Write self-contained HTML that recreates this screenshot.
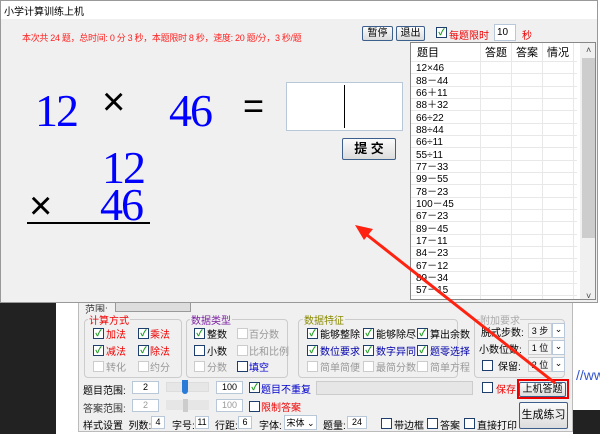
<!DOCTYPE html><html><head><meta charset="utf-8"><style>
*{margin:0;padding:0;box-sizing:border-box}
body{width:600px;height:434px;overflow:hidden;position:relative;background:#fff;font-family:"Liberation Sans","Noto Sans CJK SC",sans-serif;font-size:10px;color:#000}
.a{position:absolute;white-space:nowrap}
.cb{position:absolute;width:11px;height:11px;border:1px solid #1e3f6e;background:#fff;font-size:9px;line-height:9px;color:#1a9a1a;text-align:center;font-weight:bold}
.cbd{border-color:#ccc}
.btn{position:absolute;border:1px solid #3d5f8c;border-radius:2px;background:linear-gradient(#fbfbfb,#dcdcdc);text-align:center;white-space:nowrap}
.grp{position:absolute;border:1px solid #ccc;border-radius:4px}
.inp{position:absolute;background:#fff;border:1px solid #b8c8d8;text-align:center;font-size:9px;white-space:nowrap;overflow:hidden}
.big{position:absolute;font-family:"Liberation Serif",serif;color:#0000ff;font-size:46px;line-height:44px;letter-spacing:-2px}
</style></head><body>
<div class="a" style="left:0;top:0;width:56px;height:434px;background:#222"></div>
<div class="a" style="left:573px;top:410px;width:27px;height:24px;background:#222"></div>
<!-- lower window -->
<div class="a" style="left:78px;top:290px;width:495px;height:142px;background:#f0f0f0;border:1px solid #bbb"></div>
<div class="a" style="left:85px;top:301px;color:#333">范围:</div>
<div class="a" style="left:115px;top:300px;width:76px;height:12px;background:#ddd;border:1px solid #999"></div>
<div class="grp" style="left:84px;top:319px;width:98px;height:59px"></div>
<div class="a" style="left:88px;top:312px;color:#e00;background:#f0f0f0;padding:0 1px">计算方式</div>
<div class="cb" style="left:93px;top:328px">✓</div><div class="a" style="left:106px;top:326px;color:#e00">加法</div>
<div class="cb" style="left:138px;top:328px">✓</div><div class="a" style="left:150px;top:326px;color:#e00">乘法</div>
<div class="cb" style="left:93px;top:345px">✓</div><div class="a" style="left:106px;top:343px;color:#e00">减法</div>
<div class="cb" style="left:138px;top:345px">✓</div><div class="a" style="left:150px;top:343px;color:#e00">除法</div>
<div class="cb cbd" style="left:93px;top:361px"></div><div class="a" style="left:106px;top:359px;color:#999">转化</div>
<div class="cb cbd" style="left:138px;top:361px"></div><div class="a" style="left:150px;top:359px;color:#999">约分</div>
<div class="grp" style="left:186px;top:319px;width:102px;height:59px"></div>
<div class="a" style="left:190px;top:312px;color:#7a1fa0;background:#f0f0f0;padding:0 1px">数据类型</div>
<div class="cb" style="left:194px;top:328px">✓</div><div class="a" style="left:207px;top:326px">整数</div>
<div class="cb cbd" style="left:237px;top:328px"></div><div class="a" style="left:249px;top:326px;color:#999">百分数</div>
<div class="cb" style="left:194px;top:345px"></div><div class="a" style="left:207px;top:343px">小数</div>
<div class="cb cbd" style="left:237px;top:345px"></div><div class="a" style="left:249px;top:343px;color:#999">比和比例</div>
<div class="cb cbd" style="left:194px;top:361px"></div><div class="a" style="left:207px;top:359px;color:#999">分数</div>
<div class="cb" style="left:237px;top:361px"></div><div class="a" style="left:249px;top:359px;color:#00c">填空</div>
<div class="grp" style="left:298px;top:319px;width:160px;height:59px"></div>
<div class="a" style="left:303px;top:312px;color:#8a8a00;background:#f0f0f0;padding:0 1px">数据特征</div>
<div class="cb" style="left:307px;top:328px">✓</div><div class="a" style="left:320px;top:326px">能够整除</div>
<div class="cb" style="left:363px;top:328px">✓</div><div class="a" style="left:376px;top:326px">能够除尽</div>
<div class="cb" style="left:417px;top:328px">✓</div><div class="a" style="left:430px;top:326px">算出余数</div>
<div class="cb" style="left:307px;top:345px">✓</div><div class="a" style="left:320px;top:343px;color:#00a">数位要求</div>
<div class="cb" style="left:363px;top:345px">✓</div><div class="a" style="left:376px;top:343px;color:#00a">数字异同</div>
<div class="cb" style="left:417px;top:345px">✓</div><div class="a" style="left:430px;top:343px;color:#00a">题零选择</div>
<div class="cb cbd" style="left:307px;top:361px"></div><div class="a" style="left:320px;top:359px;color:#999">简单简便</div>
<div class="cb cbd" style="left:363px;top:361px"></div><div class="a" style="left:376px;top:359px;color:#999">最简分数</div>
<div class="cb cbd" style="left:417px;top:361px"></div><div class="a" style="left:430px;top:359px;color:#999">简单方程</div>
<div class="grp" style="left:474px;top:319px;width:91px;height:59px"></div>
<div class="a" style="left:480px;top:312px;color:#aaa;background:#f0f0f0">附加要求</div>
<div class="a" style="left:481px;top:324px">脱式步数:</div><div class="inp" style="left:528px;top:323px;width:24px;height:15px;border-color:#ccc;background:#f4f4f4">3 步</div><div class="inp" style="left:552px;top:323px;width:13px;height:15px">⌄</div>
<div class="a" style="left:479px;top:341px">小数位数:</div><div class="inp" style="left:528px;top:340px;width:24px;height:15px;border-color:#ccc;background:#f4f4f4">1 位</div><div class="inp" style="left:552px;top:340px;width:13px;height:15px">⌄</div>
<div class="cb" style="left:482px;top:360px"></div><div class="a" style="left:498px;top:358px">保留:</div><div class="inp" style="left:528px;top:357px;width:24px;height:15px;border-color:#ccc;background:#f4f4f4">2 位</div><div class="inp" style="left:552px;top:357px;width:13px;height:15px">⌄</div>
<div class="a" style="left:83px;top:382px">题目范围:</div><div class="inp" style="left:132px;top:381px;width:27px;height:13px">2</div>
<div class="a" style="left:166px;top:382px;width:43px;height:10px;background:#e6e6e6;border:1px solid #ddd"></div><div class="a" style="left:182px;top:380px;width:6px;height:14px;background:#2a7ad8;border-radius:0 0 3px 3px"></div>
<div class="inp" style="left:216px;top:381px;width:27px;height:13px">100</div>
<div class="cb" style="left:249px;top:382px">✓</div><div class="a" style="left:261px;top:381px;color:#00c">题目不重复</div>
<div class="a" style="left:316px;top:381px;width:157px;height:14px;background:#e6e6e6;border:1px solid #ccc"></div>
<div class="cb" style="left:482px;top:382px"></div><div class="a" style="left:496px;top:381px;color:#e00">保存</div>
<div class="btn" style="left:519px;top:382px;width:47px;height:15px;line-height:13px">上机答题</div>
<div class="a" style="left:517px;top:379px;width:52px;height:20px;border:2px solid #e00"></div>
<div class="a" style="left:83px;top:400px;color:#333">答案范围:</div><div class="inp" style="left:132px;top:399px;width:27px;height:13px;color:#999">2</div>
<div class="a" style="left:166px;top:400px;width:43px;height:10px;background:#e6e6e6"></div><div class="a" style="left:183px;top:399px;width:5px;height:13px;background:#ccc"></div>
<div class="inp" style="left:216px;top:399px;width:27px;height:13px;color:#999">100</div>
<div class="cb" style="left:249px;top:401px"></div><div class="a" style="left:261px;top:399px;color:#e00">限制答案</div>
<div class="btn" style="left:519px;top:402px;width:49px;height:27px;line-height:25px;font-size:11px">生成练习</div>
<div class="a" style="left:83px;top:417px">样式设置 &nbsp;列数:</div><div class="inp" style="left:151px;top:416px;width:14px;height:13px">4</div>
<div class="a" style="left:172px;top:417px">字号:</div><div class="inp" style="left:195px;top:416px;width:14px;height:13px">11</div>
<div class="a" style="left:215px;top:417px">行距:</div><div class="inp" style="left:238px;top:416px;width:14px;height:13px">6</div>
<div class="a" style="left:259px;top:417px">字体:</div><div class="inp" style="left:284px;top:415px;width:33px;height:15px">宋体 ⌄</div>
<div class="a" style="left:323px;top:417px">题量:</div><div class="inp" style="left:347px;top:416px;width:20px;height:13px">24</div>
<div class="cb" style="left:381px;top:418px"></div><div class="a" style="left:394px;top:417px">带边框</div>
<div class="cb" style="left:427px;top:418px"></div><div class="a" style="left:440px;top:417px">答案</div>
<div class="cb" style="left:464px;top:418px"></div><div class="a" style="left:477px;top:417px">直接打印</div>
<div class="a" style="left:576px;top:367px;color:#3355cc;font-size:14px">//ww</div>
<!-- main window -->
<div class="a" style="left:0;top:0;width:598px;height:303px;background:#f0f0f0;border:1px solid #999"></div>
<div class="a" style="left:1px;top:1px;width:596px;height:18px;background:#fff"></div>
<div class="a" style="left:4px;top:3px;font-size:10px">小学计算训练上机</div>
<div class="a" style="left:22px;top:31px;color:#f22;font-size:9px;letter-spacing:-0.3px">本次共 24 题，总时间: 0 分 3 秒，本题限时 8 秒，速度: 20 题/分，3 秒/题</div>
<div class="btn" style="left:362px;top:26px;width:31px;height:15px;line-height:13px">暂停</div>
<div class="btn" style="left:396px;top:26px;width:29px;height:15px;line-height:13px">退出</div>
<div class="cb" style="left:436px;top:27px">✓</div><div class="a" style="left:449px;top:27px;color:#e00">每题限时</div>
<div class="inp" style="left:494px;top:24px;width:22px;height:17px;text-align:left;padding-left:2px;font-size:10px;line-height:15px">10</div>
<div class="a" style="left:522px;top:27px;color:#e00">秒</div>
<!-- table -->
<div class="a" style="left:410px;top:42px;width:186px;height:258px;background:#fff;border:1px solid #888;overflow:hidden">
<svg width="186" height="258" style="position:absolute;left:0;top:0">
<g stroke="#e8e8e8"><line x1="69.5" y1="0" x2="69.5" y2="258"/><line x1="100.5" y1="0" x2="100.5" y2="258"/><line x1="131.5" y1="0" x2="131.5" y2="258"/><line x1="162.5" y1="0" x2="162.5" y2="258"/>
<line x1="0" y1="18.5" x2="166" y2="18.5"/><line x1="0" y1="30.5" x2="166" y2="30.5"/><line x1="0" y1="43.5" x2="166" y2="43.5"/><line x1="0" y1="55.5" x2="166" y2="55.5"/><line x1="0" y1="67.5" x2="166" y2="67.5"/><line x1="0" y1="80.5" x2="166" y2="80.5"/><line x1="0" y1="92.5" x2="166" y2="92.5"/><line x1="0" y1="104.5" x2="166" y2="104.5"/><line x1="0" y1="117.5" x2="166" y2="117.5"/><line x1="0" y1="129.5" x2="166" y2="129.5"/><line x1="0" y1="141.5" x2="166" y2="141.5"/><line x1="0" y1="154.5" x2="166" y2="154.5"/><line x1="0" y1="166.5" x2="166" y2="166.5"/><line x1="0" y1="178.5" x2="166" y2="178.5"/><line x1="0" y1="191.5" x2="166" y2="191.5"/><line x1="0" y1="203.5" x2="166" y2="203.5"/><line x1="0" y1="215.5" x2="166" y2="215.5"/><line x1="0" y1="228.5" x2="166" y2="228.5"/><line x1="0" y1="240.5" x2="166" y2="240.5"/><line x1="0" y1="252.5" x2="166" y2="252.5"/></g>
<rect x="169" y="0" width="17" height="258" fill="#f0f0f0"/><rect x="171" y="15" width="13" height="180" fill="#cdcdcd"/>
<text x="175" y="10" font-size="9" fill="#444">˄</text><text x="175" y="256" font-size="9" fill="#444">˅</text>
<g font-family="Liberation Sans,Noto Sans CJK SC,sans-serif" font-size="10" fill="#000">
<text x="6" y="13" font-size="11">题目</text><text x="74" y="13" font-size="11">答题</text><text x="105" y="13" font-size="11">答案</text><text x="136" y="13" font-size="11">情况</text>
<text x="5" y="28">12×46</text><text x="5" y="41">88－44</text><text x="5" y="53">66＋11</text><text x="5" y="65">88＋32</text><text x="5" y="78">66÷22</text><text x="5" y="90">88÷44</text><text x="5" y="102">66÷11</text><text x="5" y="115">55÷11</text><text x="5" y="127">77－33</text><text x="5" y="139">99－55</text><text x="5" y="152">78－23</text><text x="5" y="164">100－45</text><text x="5" y="176">67－23</text><text x="5" y="189">89－45</text><text x="5" y="201">17－11</text><text x="5" y="213">84－23</text><text x="5" y="226">67－12</text><text x="5" y="238">89－34</text><text x="5" y="250">57－15</text></g>
</svg></div>
<!-- expression -->
<div class="big" style="left:35px;top:89px">12</div>
<div class="a" style="left:102px;top:80px;font-size:40px;line-height:44px">×</div>
<div class="big" style="left:169px;top:89px">46</div>
<div class="a" style="left:243px;top:84px;font-size:36px;line-height:44px">=</div>
<div class="a" style="left:286px;top:82px;width:117px;height:49px;background:#fff;border:1px solid #b8c8d8"></div>
<div class="a" style="left:344px;top:85px;width:1px;height:43px;background:#000"></div>
<div class="btn" style="left:342px;top:138px;width:54px;height:22px;line-height:20px;font-size:13px;font-weight:bold">提 交</div>
<div class="big" style="left:102px;top:146px">12</div>
<div class="a" style="left:29px;top:184px;font-size:40px;line-height:44px">×</div>
<div class="big" style="left:100px;top:183px">46</div>
<div class="a" style="left:27px;top:222px;width:123px;height:2px;background:#000"></div>
<!-- arrow -->
<svg class="a" style="left:0;top:0" width="600" height="434"><line x1="555" y1="383" x2="362" y2="231" stroke="#f21" stroke-width="3"/><polygon points="355,225 373,229 364,240" fill="#f21"/></svg>
</body></html>
